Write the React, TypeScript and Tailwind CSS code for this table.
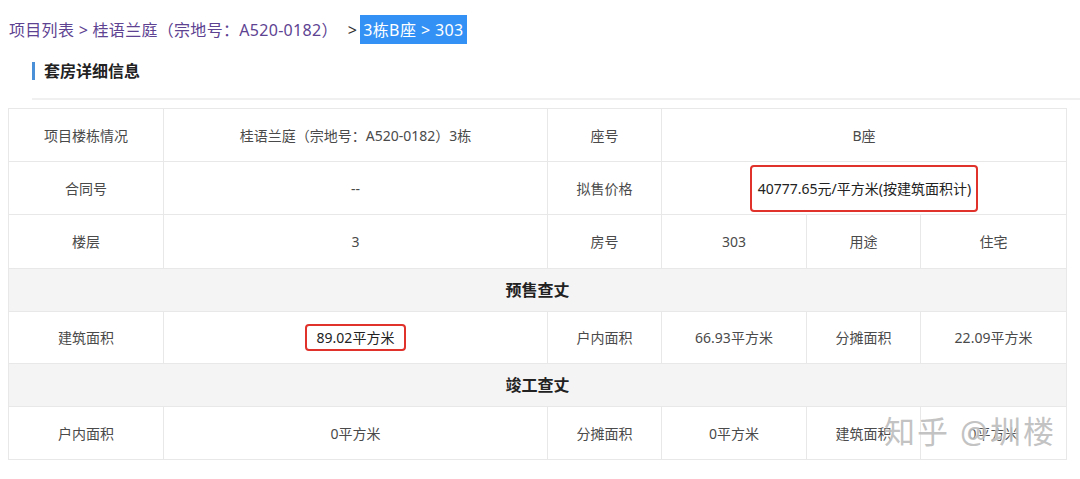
import React from "react";

const cell = "border border-[#e8e8e8] text-center text-[14px] text-[#4a4a4a] font-normal";

function Section({ title }: { title: string }) {
  return (
    <tr className="h-[43px] bg-[#f4f4f4]">
      <td colSpan={6} className="border border-[#e8e8e8] text-center text-[16px] font-bold text-[#222]">
        {title}
      </td>
    </tr>
  );
}

export default function App() {
  return (
    <div className="relative w-[1080px] h-[479px] bg-white overflow-hidden font-['Noto_Sans','Noto_Sans_CJK_SC',sans-serif]">
      {/* breadcrumb */}
      <div className="flex items-center pl-[9px] pt-[15px] h-[44px] text-[16px] text-[#5e4392] tracking-[0.3px]">
        <span>项目列表 &gt; 桂语兰庭（宗地号：A520-0182）</span>
        <span className="ml-[10px] mr-[3px] text-[#333]">&gt;</span>
        <span className="bg-[#3391f5] text-white px-[3px] h-[29px] flex items-center tracking-[0.4px]">3栋B座 &gt; 303</span>
      </div>

      {/* title */}
      <div className="ml-[32px] mt-[18px] flex items-center h-[18px] border-l-[3px] border-[#4a90d9] pl-[9px]">
        <span className="text-[16px] font-bold text-[#222]">套房详细信息</span>
      </div>
      <div className="ml-[32px] mt-[18px] h-[2px] bg-[#f0f0f0]" />

      {/* table */}
      <table className="ml-[8px] mt-[8px] w-[1058px] border-collapse table-fixed">
        <colgroup>
          <col className="w-[155px]" />
          <col className="w-[384px]" />
          <col className="w-[114px]" />
          <col className="w-[145px]" />
          <col className="w-[114px]" />
          <col className="w-[146px]" />
        </colgroup>
        <tbody>
          <tr className="h-[53px]">
            <td className={cell}>项目楼栋情况</td>
            <td className={cell}>桂语兰庭（宗地号：A520-0182）3栋</td>
            <td className={cell}>座号</td>
            <td className={cell} colSpan={3}>B座</td>
          </tr>
          <tr className="h-[53px]">
            <td className={cell}>合同号</td>
            <td className={cell}>--</td>
            <td className={cell}>拟售价格</td>
            <td className={cell} colSpan={3}>
              <span className="inline-block border-[2px] border-[#e0312b] rounded-[4px] pl-[6px] pr-[5px] py-[11px] text-[#222]">
                40777.65元/平方米(按建筑面积计)
              </span>
            </td>
          </tr>
          <tr className="h-[54px]">
            <td className={cell}>楼层</td>
            <td className={cell}>3</td>
            <td className={cell}>房号</td>
            <td className={cell}>303</td>
            <td className={cell}>用途</td>
            <td className={cell}>住宅</td>
          </tr>
          <Section title="预售查丈" />
          <tr className="h-[52px]">
            <td className={cell}>建筑面积</td>
            <td className={cell}>
              <span className="inline-block border-[2px] border-[#e0312b] rounded-[4px] px-[10px] py-[1px] text-[#222]">
                89.02平方米
              </span>
            </td>
            <td className={cell}>户内面积</td>
            <td className={cell}>66.93平方米</td>
            <td className={cell}>分摊面积</td>
            <td className={cell}>22.09平方米</td>
          </tr>
          <Section title="竣工查丈" />
          <tr className="h-[53px]">
            <td className={cell}>户内面积</td>
            <td className={cell}>0平方米</td>
            <td className={cell}>分摊面积</td>
            <td className={cell}>0平方米</td>
            <td className={cell}>建筑面积</td>
            <td className={cell}>0平方米</td>
          </tr>
        </tbody>
      </table>

      {/* watermark */}
      <div className="absolute left-[884px] top-[411px] text-[31px] leading-[40px] text-[#a8a8a8]/70 tracking-[2px] [text-shadow:0_0_2px_#fff]">
        知乎 @圳楼
      </div>
    </div>
  );
}
